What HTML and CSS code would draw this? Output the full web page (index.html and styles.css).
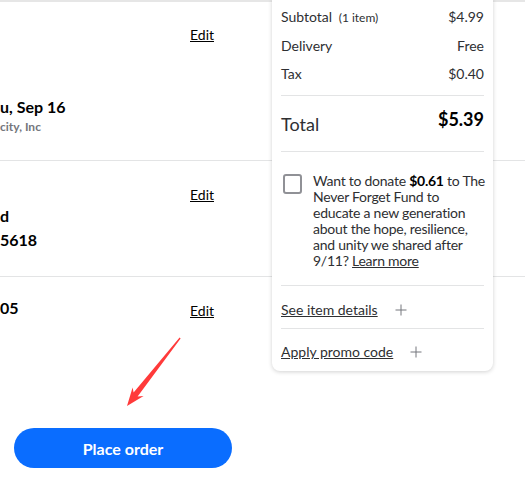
FILE: index.html
```html
<!DOCTYPE html>
<html lang="en">
<head>
<meta charset="utf-8">
<title>Checkout</title>
<link rel="stylesheet" href="styles.css">
</head>
<body>
<div class="page">
  <div class="rows">
    <section class="row row-delivery">
      <div class="row-main">
        <div class="strong">u, Sep 16</div>
        <div class="sub">city, Inc</div>
      </div>
      <a class="edit" href="#">Edit</a>
    </section>
    <section class="row row-payment">
      <div class="row-main">
        <div class="strong">d</div>
        <div class="strong card-no">5618</div>
      </div>
      <a class="edit" href="#">Edit</a>
    </section>
    <section class="row row-address">
      <div class="row-main">
        <div class="strong">05</div>
      </div>
      <a class="edit" href="#">Edit</a>
    </section>
  </div>
  <div class="actions">
    <button class="place-order" type="button">Place order</button>
  </div>

  <aside class="summary">
    <div class="lines">
      <div class="line"><span>Subtotal <small>(1 item)</small></span><span>$4.99</span></div>
      <div class="line"><span>Delivery</span><span>Free</span></div>
      <div class="line"><span>Tax</span><span>$0.40</span></div>
    </div>
    <div class="total">
      <span class="total-label">Total</span>
      <span class="total-value">$5.39</span>
    </div>
    <div class="donate">
      <span class="checkbox"></span>
      <p class="donate-text">Want to donate <b>$0.61</b> to The<br>Never Forget Fund to<br>educate a new generation<br>about the hope, resilience,<br>and unity we shared after<br>9/11? <a href="#">Learn more</a></p>
    </div>
    <div class="expander first">
      <a href="#">See item details</a>
      <svg class="plus" width="12" height="12" viewBox="0 0 12 12"><path d="M6 0.5v11M0.5 6h11" stroke="#74767c" stroke-width="1" fill="none"/></svg>
    </div>
    <div class="expander last">
      <a href="#">Apply promo code</a>
      <svg class="plus" width="12" height="12" viewBox="0 0 12 12"><path d="M6 0.5v11M0.5 6h11" stroke="#74767c" stroke-width="1" fill="none"/></svg>
    </div>
  </aside>

  <svg class="arrow" width="525" height="478" viewBox="0 0 525 478">
    <polygon fill="#ff3a3a" points="180.6,338.4 137.6,396.4 143.6,396.1 127,406 132.6,387.5 133.6,392.4 179.6,337.6"/>
  </svg>
</div>
</body>
</html>
```

FILE: styles.css
```css
* { box-sizing: border-box; }
html, body { margin: 0; padding: 0; background: #fff; }
body {
  font-family: Lato, "Open Sans", sans-serif;
  color: #2e2f32;
  width: 525px;
  height: 478px;
  overflow: hidden;
}
.page {
  position: relative;
  height: 478px;
  border-top: 2px solid #e6e6e6;
}
.row {
  display: grid;
  grid-template-columns: 190px auto;
  align-items: start;
  border-bottom: 1px solid #e3e4e5;
}
.row-delivery { padding: 23px 0 24px; }
.row-delivery .row-main { margin-top: 71px; }
.row-payment { padding: 24px 0 25px; }
.row-payment .row-main { margin-top: 20px; }
.row-address { padding: 20px 0 0; border-bottom: none; }
.row-address .edit { margin-top: 4px; }
.strong {
  font-size: 16px;
  line-height: 22px;
  font-weight: 700;
  color: #000;
}
.card-no { margin-top: 2px; }
.sub {
  font-size: 12px;
  line-height: 18px;
  font-weight: 700;
  color: #74767c;
}
.edit {
  font-size: 14px;
  line-height: 20px;
  color: #000;
  text-decoration: underline;
  justify-self: start;
}
.actions { padding: 107px 0 0 14px; }
.place-order {
  width: 218px;
  height: 40px;
  border: none;
  border-radius: 20px;
  background: #0a6dff;
  color: #fff;
  font-family: Lato, sans-serif;
  font-size: 16px;
  font-weight: 700;
  padding: 0;
}

.summary {
  position: absolute;
  left: 272px;
  top: -3px;
  width: 221px;
  background: #fff;
  padding: 8px 9px 0 9px;
  border-radius: 0 0 8px 8px;
  box-shadow: 0 1px 4px rgba(0, 0, 0, 0.18);
}
.lines {
  display: flex;
  flex-direction: column;
  gap: 8px;
  padding-bottom: 11px;
  border-bottom: 1px solid #e3e4e5;
}
.line {
  display: flex;
  justify-content: space-between;
  font-size: 14px;
  line-height: 20px;
}
.line small { font-size: 12px; margin-left: 3px; }
.total {
  display: flex;
  justify-content: space-between;
  align-items: flex-start;
  padding: 16px 0 15px;
  border-bottom: 1px solid #e3e4e5;
}
.total-label { font-size: 18px; line-height: 24px; }
.total-value { font-size: 18px; line-height: 22px; font-weight: 700; color: #000; margin-top: -4px; margin-bottom: 4px; }
.donate {
  display: flex;
  align-items: flex-start;
  padding: 21px 0 16px 2px;
  border-bottom: 1px solid #e3e4e5;
}
.checkbox {
  flex: none;
  width: 19px;
  height: 20px;
  border: 2px solid #909196;
  border-radius: 3px;
  margin-top: 1px;
}
.donate-text {
  margin: 0 0 0 11px;
  font-size: 14px;
  line-height: 16px;
  letter-spacing: -0.25px;
  white-space: nowrap;
}
.donate-text b { color: #000; }
.donate-text a { color: #2e2f32; text-decoration: underline; }
.expander {
  display: flex;
  align-items: center;
  gap: 17px;
  font-size: 14px;
  line-height: 20px;
}
.expander a { color: #2e2f32; text-decoration: underline; }
.expander.first { padding: 14px 0 8px; border-bottom: 1px solid #e3e4e5; }
.expander.last { padding: 13px 0 9px; }
.plus { flex: none; }
.arrow {
  position: absolute;
  left: 0;
  top: -2px;
  pointer-events: none;
}
```
